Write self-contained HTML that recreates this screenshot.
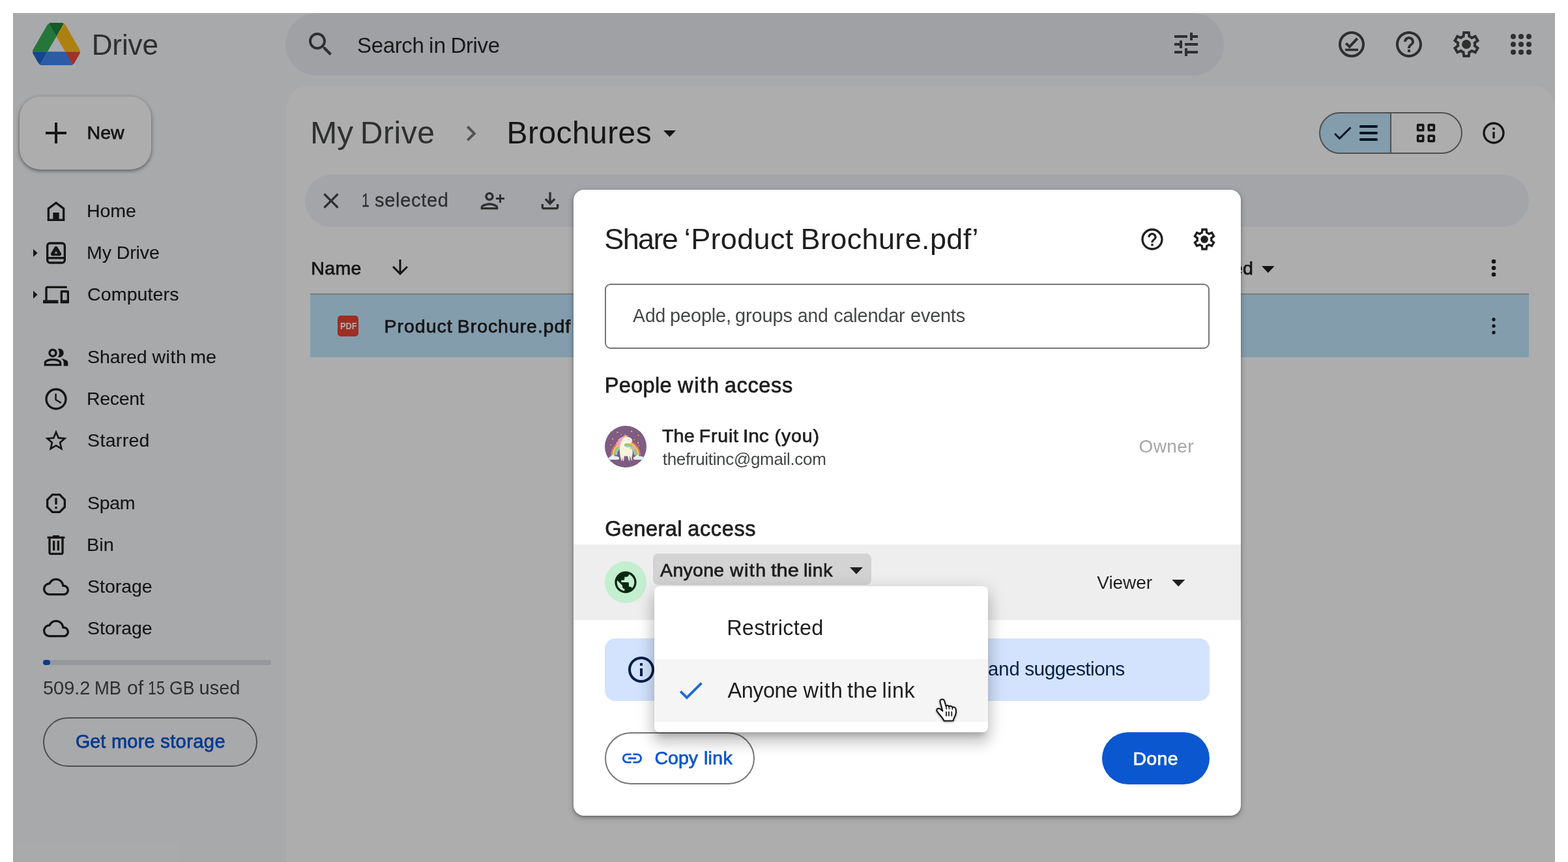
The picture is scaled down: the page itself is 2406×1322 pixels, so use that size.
<!DOCTYPE html>
<html lang="en"><head><meta charset="utf-8"><title>Brochures - Google Drive</title>
<style>
html,body{margin:0;padding:0;background:#fff}
body{width:2406px;height:1322px;overflow:hidden;position:relative;font-family:"Liberation Sans",sans-serif}
#app{position:absolute;left:0;top:0;width:2406px;height:1322px;overflow:hidden;clip-path:inset(20px 20px 0 20px);will-change:transform}
#dialog{position:absolute;left:0;top:0;width:2406px;height:1322px;will-change:transform}
#bg{position:absolute;left:20px;top:20px;width:2366px;height:1302px;background:#f8fafd}
#scrim{position:absolute;left:20px;top:20px;width:2366px;height:1302px;background:rgba(0,0,0,.32)}
.b{position:absolute;box-sizing:content-box}
.i{position:absolute;display:block}
.t{position:absolute;white-space:nowrap;line-height:1;margin:0;padding:0}
</style></head>
<body>
<div id="app">
<div id="bg"></div>
<div class="b" style="left:438px;top:20px;width:1440px;height:96px;background:#ebedf4;border-radius:48px"></div>
<svg class="i" style="left:468px;top:44px;width:48px;height:48px;color:#444746" viewBox="0 0 24 24" fill="currentColor"><path d="M15.5 14h-.79l-.28-.27C15.41 12.59 16 11.11 16 9.5 16 5.91 13.09 3 9.5 3S3 5.91 3 9.5 5.91 16 9.5 16c1.61 0 3.09-.59 4.23-1.57l.27.28v.79l5 4.99L20.49 19l-4.99-5zm-6 0C7.01 14 5 11.99 5 9.5S7.01 5 9.5 5 14 7.01 14 9.5 11.99 14 9.5 14z"/></svg>
<div class="w"><span class="t" style="top:53.0px;font-size:33px;color:#262626;left:548.0px;letter-spacing:-0.36px">Search</span> <span class="t" style="top:53.0px;font-size:33px;color:#262626;left:658.0px;transform:scaleX(1.019);transform-origin:0 0">in</span> <span class="t" style="top:53.0px;font-size:33px;color:#262626;left:691.5px;letter-spacing:-0.38px">Drive</span></div>
<svg class="i" style="left:1796px;top:44px;width:48px;height:48px;color:#444746" viewBox="0 0 24 24" fill="currentColor"><path d="M3 17v2h6v-2H3zM3 5v2h10V5H3zm10 16v-2h8v-2h-8v-2h-2v6h2zM7 9v2H3v2h4v2h2V9H7zm14 4v-2H11v2h10zm-6-4h2V7h4V5h-4V3h-2v6z"/></svg>
<svg class="i" style="left:2050px;top:44px;width:48px;height:48px;color:#444746" viewBox="0 0 24 24" fill="currentColor"><circle cx="12" cy="12" r="9" fill="none" stroke="currentColor" stroke-width="2"/><path d="M7.6 11.2l2.8 2.6 6-6.3" fill="none" stroke="currentColor" stroke-width="2"/><path d="M7 16.2h10" fill="none" stroke="currentColor" stroke-width="1.8"/></svg>
<svg class="i" style="left:2138px;top:44px;width:48px;height:48px;color:#444746" viewBox="0 0 24 24" fill="currentColor"><path d="M11 18h2v-2h-2v2zm1-16C6.48 2 2 6.48 2 12s4.48 10 10 10 10-4.48 10-10S17.52 2 12 2zm0 18c-4.41 0-8-3.59-8-8s3.59-8 8-8 8 3.59 8 8-3.59 8-8 8zm0-14c-2.21 0-4 1.79-4 4h2c0-1.1.9-2 2-2s2 .9 2 2c0 2-3 1.75-3 5h2c0-2.25 3-2.5 3-5 0-2.21-1.79-4-4-4z"/></svg>
<svg class="i" style="left:2226px;top:44px;width:48px;height:48px;color:#444746" viewBox="0 0 24 24" fill="currentColor"><path d="M9.250 22l-.400-3.200q-.325-.125-.613-.300-.287-.175-.562-.375L4.700 19.375l-2.750-4.750 2.575-1.950Q4.500 12.500 4.500 12.338v-.675q0-.163.025-.338L1.950 9.375l2.750-4.750 2.975 1.250q.275-.200.575-.375.300-.175.600-.300l.400-3.200h5.500l.400 3.200q.325.125.613.300.287.175.562.375l2.975-1.250 2.750 4.750-2.575 1.950q.025.175.025.338v.675q0 .162-.050.337l2.575 1.950-2.750 4.750-2.950-1.250q-.275.200-.575.375-.300.175-.600.300l-.400 3.200zM11 20h1.975l.350-2.650q.775-.200 1.438-.587.662-.388 1.212-.938l2.475 1.025.975-1.700-2.150-1.625q.125-.350.175-.737.050-.388.050-.788t-.050-.787q-.050-.388-.175-.738l2.150-1.625-.975-1.700-2.475 1.050q-.550-.575-1.212-.962-.663-.388-1.438-.588L13 4h-1.975l-.350 2.650q-.775.200-1.437.588-.663.387-1.213.937L5.550 7.150l-.975 1.700 2.150 1.600q-.125.375-.175.750-.050.375-.050.800 0 .400.050.775t.175.750l-2.150 1.625.975 1.700 2.475-1.050q.550.575 1.213.962.662.388 1.437.588zm1.050-4.500q1.450 0 2.475-1.025Q15.550 13.450 15.550 12q0-1.450-1.025-2.475Q13.500 8.500 12.050 8.500q-1.475 0-2.488 1.025Q8.550 10.550 8.550 12q0 1.450 1.012 2.475Q10.575 15.500 12.050 15.500z"/></svg>
<svg class="i" style="left:2310px;top:44px;width:48px;height:48px;color:#444746" viewBox="0 0 24 24" fill="currentColor"><circle cx="6" cy="6" r="2"/><circle cx="12" cy="6" r="2"/><circle cx="18" cy="6" r="2"/><circle cx="6" cy="12" r="2"/><circle cx="12" cy="12" r="2"/><circle cx="18" cy="12" r="2"/><circle cx="6" cy="18" r="2"/><circle cx="12" cy="18" r="2"/><circle cx="18" cy="18" r="2"/></svg>
<svg class="i" style="left:49.5px;top:34.6px;width:73px;height:65.300px" viewBox="0 0 87.3 78"><path d="m6.6 66.85 3.85 6.65c.8 1.4 1.95 2.5 3.3 3.3l13.75-23.8h-27.5c0 1.55.4 3.1 1.2 4.5z" fill="#1d67d2"/><path d="m43.65 25-13.75-23.8c-1.35.8-2.5 1.9-3.3 3.3l-25.400 44a9.060 9.060 0 0 0 -1.200 4.500h27.500z" fill="#36ae58"/><path d="m73.550 76.800c1.350-.800 2.500-1.900 3.300-3.300l1.600-2.750 7.650-13.250c.8-1.400 1.200-2.950 1.200-4.500h-27.502l5.852 11.500z" fill="#eb4a3b"/><path d="m43.650 25 13.750-23.800c-1.350-.8-2.900-1.200-4.500-1.200h-18.500c-1.600 0-3.150.45-4.500 1.200z" fill="#1d873b"/><path d="m59.800 53h-32.300l-13.750 23.800c1.350.8 2.900 1.200 4.500 1.200h50.800c1.600 0 3.150-.45 4.500-1.200z" fill="#4187f7"/><path d="m73.400 26.500-12.700-22c-.8-1.400-1.950-2.500-3.300-3.300l-13.750 23.800 16.150 28h27.450c0-1.550-.4-3.100-1.200-4.500z" fill="#ffbf18"/></svg>
<span class="t" style="top:47.0px;font-size:44px;color:#444746;left:140.7px;letter-spacing:-0.12px">Drive</span>
<div class="b" style="left:30px;top:148px;width:202px;height:112px;background:#fff;border-radius:32px;box-shadow:0 2px 4px rgba(0,0,0,.3),0 2px 6px 2px rgba(0,0,0,.15)"></div>
<div class="b" style="left:70px;top:202px;width:32px;height:4px;background:#1f1f1f"></div>
<div class="b" style="left:84px;top:188px;width:4px;height:32px;background:#1f1f1f"></div>
<span class="t" style="top:189.0px;font-size:28.5px;color:#1f1f1f;left:133.6px;-webkit-text-stroke:0.75px #1f1f1f">New</span>
<svg class="i" style="left:66px;top:303.7px;width:40px;height:40px;color:#1f1f1f" viewBox="0 0 24 24" fill="currentColor"><path d="M4 21V9l8-6 8 6v12H4zm2-2h12v-9l-6-4.5L6 10v9z" fill-rule="evenodd"/><path d="M9.2 13.2h5.6V20H9.2z"/></svg>
<div class="w"><span class="t" style="top:309.0px;font-size:28.5px;color:#1f1f1f;left:133.1px;letter-spacing:-0.13px;-webkit-text-stroke:0.15px #1f1f1f">Home</span></div>
<svg class="i" style="left:66px;top:367.5px;width:40px;height:40px;color:#1f1f1f" viewBox="0 0 24 24" fill="currentColor"><rect x="4" y="3" width="16" height="18" rx="2.400" fill="none" stroke="currentColor" stroke-width="2"/><path d="M4 16.600h16" stroke="currentColor" stroke-width="2" fill="none"/><path d="M12 5.900c.620 0 1.150.300 1.450.830l3.200 5.350c.660 1.130-.130 2.520-1.450 2.520H8.800c-1.320 0-2.110-1.390-1.450-2.520l3.200-5.350c.300-.530.830-.830 1.450-.830zm0 4.300l-1.350 2.300h2.700z" fill-rule="evenodd"/></svg>
<div class="w"><span class="t" style="top:373.0px;font-size:28.5px;color:#1f1f1f;left:133.1px;letter-spacing:-0.11px;-webkit-text-stroke:0.15px #1f1f1f">My Drive</span></div>
<svg class="i" style="left:66px;top:432px;width:40px;height:40px;color:#1f1f1f" viewBox="0 0 24 24" fill="currentColor"><path d="M4 6h18V4H4c-1.1 0-2 .9-2 2v11H0v3h14v-3H4V6zm19 2h-6c-.55 0-1 .45-1 1v10c0 .55.45 1 1 1h6c.55 0 1-.45 1-1V9c0-.55-.45-1-1-1zm-1 9h-4v-7h4v7z"/></svg>
<div class="w"><span class="t" style="top:437.0px;font-size:28.5px;color:#1f1f1f;left:134.1px;letter-spacing:0.12px;-webkit-text-stroke:0.15px #1f1f1f">Computers</span></div>
<svg class="i" style="left:66px;top:528px;width:40px;height:40px;color:#1f1f1f" viewBox="0 0 24 24" fill="currentColor"><path d="M1 20v-2.800c0-.570.150-1.090.440-1.560.290-.470.680-.840 1.160-1.090 1.030-.520 2.080-.900 3.150-1.160C6.820 13.130 7.900 13 9 13s2.180.130 3.250.390c1.070.260 2.120.640 3.150 1.160.480.250.870.620 1.160 1.090.290.470.440.990.440 1.560V20H1zm18 0v-3c0-.730-.200-1.440-.610-2.110-.410-.680-.990-1.260-1.740-1.740.850.100 1.650.270 2.400.510.750.240 1.450.540 2.100.890.600.330 1.060.700 1.380 1.110.320.410.470.850.470 1.340v3h-4zM9 12c-1.100 0-2.040-.390-2.830-1.180C5.390 10.040 5 9.100 5 8s.390-2.040 1.170-2.830C6.960 4.390 7.900 4 9 4s2.040.390 2.830 1.170C12.610 5.960 13 6.900 13 8s-.390 2.040-1.170 2.820C11.040 11.610 10.100 12 9 12zm10-4c0 1.100-.390 2.040-1.170 2.820-.790.790-1.730 1.180-2.830 1.180-.180 0-.420-.020-.700-.060-.280-.040-.520-.090-.700-.140.450-.530.800-1.130 1.040-1.780.240-.650.360-1.320.360-2.020s-.120-1.370-.360-2.020c-.240-.650-.590-1.250-1.040-1.780.230-.080.470-.140.700-.160.230-.030.470-.040.700-.040 1.100 0 2.040.390 2.830 1.170C18.610 5.960 19 6.900 19 8zM3 18h12v-.800c0-.180-.050-.350-.140-.500-.090-.150-.210-.270-.360-.350-.900-.450-1.810-.790-2.730-1.010C10.860 15.110 9.930 15 9 15s-1.860.110-2.780.340c-.920.220-1.820.560-2.720 1.010-.150.080-.270.200-.360.350-.090.150-.140.320-.140.500v.800zm6-8c.550 0 1.020-.200 1.410-.590.390-.390.590-.860.590-1.410s-.200-1.020-.590-1.410C10.020 6.200 9.550 6 9 6s-1.020.200-1.410.590C7.200 6.980 7 7.450 7 8s.200 1.020.590 1.410C7.980 9.800 8.450 10 9 10z"/></svg>
<div class="w"><span class="t" style="top:533.0px;font-size:28.5px;color:#1f1f1f;left:134.1px;letter-spacing:-0.10px;-webkit-text-stroke:0.15px #1f1f1f">Shared</span> <span class="t" style="top:533.0px;font-size:28.5px;color:#1f1f1f;left:233.4px;letter-spacing:0.59px;-webkit-text-stroke:0.15px #1f1f1f">with</span> <span class="t" style="top:533.0px;font-size:28.5px;color:#1f1f1f;left:292.2px;-webkit-text-stroke:0.15px #1f1f1f;transform:scaleX(1.015);transform-origin:0 0">me</span></div>
<svg class="i" style="left:66px;top:592px;width:40px;height:40px;color:#1f1f1f" viewBox="0 0 24 24" fill="currentColor"><path d="M11.99 2C6.47 2 2 6.48 2 12s4.47 10 9.99 10C17.52 22 22 17.52 22 12S17.52 2 11.99 2zM12 20c-4.42 0-8-3.58-8-8s3.58-8 8-8 8 3.58 8 8-3.58 8-8 8zm.5-13H11v6l5.25 3.15.75-1.23-4.5-2.67z"/></svg>
<div class="w"><span class="t" style="top:597.0px;font-size:28.5px;color:#1f1f1f;left:133.1px;letter-spacing:-0.33px;-webkit-text-stroke:0.15px #1f1f1f">Recent</span></div>
<svg class="i" style="left:66px;top:656px;width:40px;height:40px;color:#1f1f1f" viewBox="0 0 24 24" fill="currentColor"><path d="M22 9.24l-7.19-.62L12 2 9.19 8.63 2 9.24l5.46 4.73L5.82 21 12 17.27 18.18 21l-1.63-7.03L22 9.24zM12 15.4l-3.76 2.27 1-4.28-3.32-2.88 4.38-.38L12 6.1l1.71 4.04 4.38.38-3.32 2.88 1 4.28L12 15.4z"/></svg>
<div class="w"><span class="t" style="top:661.0px;font-size:28.5px;color:#1f1f1f;left:134.1px;letter-spacing:0.32px;-webkit-text-stroke:0.15px #1f1f1f">Starred</span></div>
<svg class="i" style="left:66px;top:752px;width:40px;height:40px;color:#1f1f1f" viewBox="0 0 24 24" fill="currentColor"><path d="M15.73 3H8.27L3 8.27v7.46L8.27 21h7.46L21 15.73V8.27L15.73 3zM19 14.9L14.9 19H9.1L5 14.9V9.1L9.1 5h5.8L19 9.1v5.8z"/><path d="M11 7h2v6h-2z"/><circle cx="12" cy="16" r="1.1"/></svg>
<div class="w"><span class="t" style="top:757.0px;font-size:28.5px;color:#1f1f1f;left:134.1px;letter-spacing:-0.33px;-webkit-text-stroke:0.15px #1f1f1f">Spam</span></div>
<svg class="i" style="left:66px;top:816px;width:40px;height:40px;color:#1f1f1f" viewBox="0 0 24 24" fill="currentColor"><path d="M15 3H9v1H4v2h1v13c0 1.1.9 2 2 2h10c1.1 0 2-.9 2-2V6h1V4h-5V3zm2 3v13H7V6h10z"/><path d="M9 8h2v9H9zm4 0h2v9h-2z"/></svg>
<div class="w"><span class="t" style="top:821.0px;font-size:28.5px;color:#1f1f1f;left:133.1px;-webkit-text-stroke:0.15px #1f1f1f;transform:scaleX(1.012);transform-origin:0 0">Bin</span></div>
<svg class="i" style="left:66px;top:880px;width:40px;height:40px;color:#1f1f1f" viewBox="0 0 24 24" fill="currentColor"><path d="M19.35 10.04C18.67 6.59 15.64 4 12 4 9.11 4 6.6 5.64 5.35 8.04 2.34 8.36 0 10.91 0 14c0 3.31 2.69 6 6 6h13c2.76 0 5-2.24 5-5 0-2.64-2.05-4.78-4.65-4.96zM19 18H6c-2.21 0-4-1.79-4-4 0-2.05 1.53-3.76 3.56-3.97l1.07-.11.5-.95C8.08 7.14 9.94 6 12 6c2.62 0 4.88 1.86 5.39 4.43l.3 1.5 1.53.11c1.56.1 2.78 1.41 2.78 2.96 0 1.65-1.35 3-3 3z"/></svg>
<div class="w"><span class="t" style="top:885.0px;font-size:28.5px;color:#1f1f1f;left:134.1px;letter-spacing:-0.04px;-webkit-text-stroke:0.15px #1f1f1f">Storage</span></div>
<svg class="i" style="left:66px;top:944px;width:40px;height:40px;color:#1f1f1f" viewBox="0 0 24 24" fill="currentColor"><path d="M19.35 10.04C18.67 6.59 15.64 4 12 4 9.11 4 6.6 5.64 5.35 8.04 2.34 8.36 0 10.91 0 14c0 3.31 2.69 6 6 6h13c2.76 0 5-2.24 5-5 0-2.64-2.05-4.78-4.65-4.96zM19 18H6c-2.21 0-4-1.79-4-4 0-2.05 1.53-3.76 3.56-3.97l1.07-.11.5-.95C8.08 7.14 9.94 6 12 6c2.62 0 4.88 1.86 5.39 4.43l.3 1.5 1.53.11c1.56.1 2.78 1.41 2.78 2.96 0 1.65-1.35 3-3 3z"/></svg>
<div class="w"><span class="t" style="top:949.0px;font-size:28.5px;color:#1f1f1f;left:134.1px;letter-spacing:-0.04px;-webkit-text-stroke:0.15px #1f1f1f">Storage</span></div>
<svg class="i" style="left:50px;top:380.5px;width:9px;height:14px" viewBox="0 0 9 14"><path d="M1 1l6.600 6L1 13z" fill="#1f1f1f"/></svg>
<svg class="i" style="left:50px;top:444.5px;width:9px;height:14px" viewBox="0 0 9 14"><path d="M1 1l6.600 6L1 13z" fill="#1f1f1f"/></svg>
<div class="b" style="left:66px;top:1012px;width:350px;height:8px;background:#dfe1e5;border-radius:4px"></div>
<div class="b" style="left:66px;top:1012px;width:11px;height:8px;background:#0b57d0;border-radius:4px"></div>
<div class="w"><span class="t" style="top:1041.0px;font-size:29px;color:#444746;left:66.0px;letter-spacing:-0.04px">509.2</span> <span class="t" style="top:1041.0px;font-size:29px;color:#444746;left:145.4px;transform:scaleX(0.945);transform-origin:0 0">MB</span> <span class="t" style="top:1041.0px;font-size:29px;color:#444746;left:194.5px;transform:scaleX(1.043);transform-origin:0 0">of</span> <span class="t" style="top:1041.0px;font-size:29px;color:#444746;left:227.2px;transform:scaleX(0.801);transform-origin:0 0">15</span> <span class="t" style="top:1041.0px;font-size:29px;color:#444746;left:260.0px;transform:scaleX(0.918);transform-origin:0 0">GB</span> <span class="t" style="top:1041.0px;font-size:29px;color:#444746;left:305.6px;letter-spacing:-0.02px">used</span></div>
<div class="b" style="left:66px;top:1100px;width:329px;height:76px;border:2px solid #747775;border-radius:38px;box-sizing:border-box"></div>
<div class="w"><span class="t" style="top:1123.0px;font-size:29px;color:#0b57d0;left:116.4px;-webkit-text-stroke:0.75px #0b57d0;transform:scaleX(0.989);transform-origin:0 0">Get</span> <span class="t" style="top:1123.0px;font-size:29px;color:#0b57d0;left:170.9px;letter-spacing:0.25px;-webkit-text-stroke:0.75px #0b57d0">more</span> <span class="t" style="top:1123.0px;font-size:29px;color:#0b57d0;left:246.2px;letter-spacing:0.44px;-webkit-text-stroke:0.75px #0b57d0">storage</span></div>
<div class="b" style="left:440px;top:132px;width:1946px;height:1200px;background:#fff;border-radius:32px 32px 0 0"></div>
<div class="w"><span class="t" style="top:180.0px;font-size:48px;color:#444746;left:476.0px;transform:scaleX(1.034);transform-origin:0 0">My</span> <span class="t" style="top:180.0px;font-size:48px;color:#444746;left:552.7px;letter-spacing:0.55px">Drive</span></div>
<svg class="i" style="left:698.9px;top:180.5px;width:47.4px;height:47.4px;color:#7a7b7b" viewBox="0 0 24 24" fill="currentColor"><path d="M10 6L8.59 7.41 13.17 12l-4.58 4.59L10 18l6-6z"/></svg>
<span class="t" style="top:180.0px;font-size:48px;color:#1f1f1f;left:777.6px;letter-spacing:0.41px">Brochures</span>
<svg class="i" style="left:1018px;top:200px;width:19px;height:10px" viewBox="0 0 19 10"><path d="M0 0h19L9.500 10z" fill="#1f1f1f"/></svg>
<div class="b" style="left:2024px;top:172px;width:220px;height:64px;border:2px solid #747775;border-radius:32px;box-sizing:border-box;background:linear-gradient(90deg,#c2e7ff 0,#c2e7ff 107px,#747775 107px,#747775 109px,#fff 109px)"></div>
<svg class="i" style="left:2042px;top:186px;width:36px;height:36px;color:#001d35" viewBox="0 0 24 24" fill="currentColor"><path d="M9 16.17L4.83 12l-1.42 1.41L9 19 21 7l-1.41-1.41z"/></svg>
<svg class="i" style="left:2080px;top:184px;width:40px;height:40px;color:#001d35" viewBox="0 0 24 24" fill="currentColor"><g fill="none" stroke="currentColor" stroke-width="2.400" stroke-linecap="round"><path d="M4.700 6h14.600M4.700 12h14.600M4.700 18h14.600"/></g></svg>
<svg class="i" style="left:2168px;top:184.2px;width:40px;height:40px;color:#1f1f1f" viewBox="0 0 24 24" fill="currentColor"><g fill="none" stroke="currentColor" stroke-width="2.150" stroke-linejoin="round"><rect x="4.575" y="4.575" width="4.850" height="4.850" rx=".5"/><rect x="14.575" y="4.575" width="4.850" height="4.850" rx=".5"/><rect x="4.575" y="14.575" width="4.850" height="4.850" rx=".5"/><rect x="14.575" y="14.575" width="4.850" height="4.850" rx=".5"/></g></svg>
<svg class="i" style="left:2272px;top:184px;width:40px;height:40px;color:#1f1f1f" viewBox="0 0 24 24" fill="currentColor"><path d="M11 7h2v2h-2zm0 4h2v6h-2zm1-9C6.48 2 2 6.48 2 12s4.48 10 10 10 10-4.48 10-10S17.52 2 12 2zm0 18c-4.41 0-8-3.59-8-8s3.59-8 8-8 8 3.59 8 8-3.59 8-8 8z"/></svg>
<div class="b" style="left:468px;top:268px;width:1878px;height:80px;background:#f0f4f9;border-radius:40px"></div>
<svg class="i" style="left:488.1px;top:288.2px;width:40px;height:40px;color:#444746" viewBox="0 0 24 24" fill="currentColor"><path d="M19 6.41L17.59 5 12 10.59 6.41 5 5 6.41 10.59 12 5 17.59 6.41 19 12 13.41 17.59 19 19 17.59 13.41 12z"/></svg>
<div class="w"><span class="t" style="top:293.0px;font-size:29px;color:#444746;left:554.9px;-webkit-text-stroke:0.3px #444746;transform:scaleX(0.731);transform-origin:0 0">1</span> <span class="t" style="top:293.0px;font-size:29px;color:#444746;left:575.0px;letter-spacing:0.71px;-webkit-text-stroke:0.3px #444746">selected</span></div>
<svg class="i" style="left:736px;top:288.2px;width:40px;height:40px;color:#444746" viewBox="0 0 24 24" fill="currentColor"><g transform="translate(24 0) scale(-1 1)"><path d="M15 12c2.21 0 4-1.79 4-4s-1.79-4-4-4-4 1.79-4 4 1.79 4 4 4zm0-6c1.1 0 2 .9 2 2s-.9 2-2 2-2-.9-2-2 .9-2 2-2zm0 8c-2.67 0-8 1.34-8 4v2h16v-2c0-2.66-5.33-4-8-4zm-6 4c.22-.72 3.31-2 6-2 2.7 0 5.8 1.29 6 2H9z"/></g></svg>
<div class="b" style="left:760.6px;top:303px;width:13.6px;height:3.2px;background:#444746"></div>
<div class="b" style="left:765.8px;top:297.8px;width:3.2px;height:13.6px;background:#444746"></div>
<svg class="i" style="left:823.9px;top:288px;width:40px;height:40px;color:#444746" viewBox="0 0 24 24" fill="currentColor"><path d="M18 15v3H6v-3H4v3c0 1.1.9 2 2 2h12c1.1 0 2-.9 2-2v-3h-2zm-1-4l-1.41-1.41L13 12.17V4h-2v8.17L8.41 9.59 7 11l5 5 5-5z"/></svg>
<span class="t" style="top:397.0px;font-size:28.5px;color:#1f1f1f;left:477.3px;letter-spacing:0.34px;-webkit-text-stroke:0.75px #1f1f1f">Name</span>
<svg class="i" style="left:596px;top:392px;width:36px;height:36px;color:#1f1f1f" viewBox="0 0 24 24" fill="currentColor"><path d="M20 12l-1.41-1.41L13 16.17V4h-2v12.17l-5.580-5.590L4 12l8 8 8-8z"/></svg>
<span class="t" style="top:397.0px;font-size:28.5px;color:#1f1f1f;right:483.2px;-webkit-text-stroke:0.75px #1f1f1f">Last modified</span>
<svg class="i" style="left:1935.500px;top:408px;width:19.500px;height:10.500px" viewBox="0 0 19 10"><path d="M0 0h19L9.500 10z" fill="#1f1f1f"/></svg>
<svg class="i" style="left:2272px;top:391px;width:40px;height:40px;color:#1f1f1f" viewBox="0 0 24 24" fill="currentColor"><circle cx="12" cy="6" r="2"/><circle cx="12" cy="12" r="2"/><circle cx="12" cy="18" r="2"/></svg>
<div class="b" style="left:476px;top:450px;width:1870px;height:98px;background:#c2e7ff;border-top:2px solid #b4b6b8;box-sizing:border-box"></div>
<div class="b" style="left:518px;top:484px;width:32px;height:32px;background:#ea4335;border-radius:5px"></div>
<span class="t" style="top:492.0px;font-size:15px;color:#fff;left:521.5px;font-weight:700;transform:scaleX(0.850);transform-origin:0 0">PDF</span>
<div class="w"><span class="t" style="top:486.0px;font-size:28.5px;color:#1f1f1f;left:589.4px;letter-spacing:1.01px;-webkit-text-stroke:0.75px #1f1f1f">Product</span> <span class="t" style="top:486.0px;font-size:28.5px;color:#1f1f1f;left:701.8px;letter-spacing:0.93px;-webkit-text-stroke:0.75px #1f1f1f">Brochure.pdf</span></div>
<svg class="i" style="left:2272px;top:479.8px;width:40px;height:40px;color:#1f1f1f" viewBox="0 0 24 24" fill="currentColor"><circle cx="12" cy="6" r="1.6"/><circle cx="12" cy="12" r="1.6"/><circle cx="12" cy="18" r="1.6"/></svg>
<div id="scrim"></div>
</div>
<div id="dialog">
<div class="b" style="left:880px;top:291px;width:1024px;height:960px;background:#fff;border-radius:16px;box-shadow:0 2px 4px rgba(0,0,0,.3),0 3px 8px 2px rgba(0,0,0,.15)"></div>
<div class="w"><span class="t" style="top:344.0px;font-size:45px;color:#1f1f1f;left:927.3px;letter-spacing:-1.62px">Share</span> <span class="t" style="top:344.0px;font-size:45px;color:#1f1f1f;left:1049.8px;letter-spacing:0.34px">‘Product</span> <span class="t" style="top:344.0px;font-size:45px;color:#1f1f1f;left:1228.6px;letter-spacing:0.36px">Brochure.pdf’</span></div>
<svg class="i" style="left:1748px;top:347px;width:40px;height:40px;color:#1f1f1f" viewBox="0 0 24 24" fill="currentColor"><path d="M11 18h2v-2h-2v2zm1-16C6.48 2 2 6.48 2 12s4.48 10 10 10 10-4.48 10-10S17.52 2 12 2zm0 18c-4.41 0-8-3.59-8-8s3.59-8 8-8 8 3.59 8 8-3.59 8-8 8zm0-14c-2.21 0-4 1.79-4 4h2c0-1.1.9-2 2-2s2 .9 2 2c0 2-3 1.75-3 5h2c0-2.25 3-2.5 3-5 0-2.21-1.79-4-4-4z"/></svg>
<svg class="i" style="left:1828px;top:347px;width:40px;height:40px;color:#1f1f1f" viewBox="0 0 24 24" fill="currentColor"><path d="M9.250 22l-.400-3.200q-.325-.125-.613-.300-.287-.175-.562-.375L4.700 19.375l-2.750-4.750 2.575-1.950Q4.500 12.500 4.500 12.338v-.675q0-.163.025-.338L1.950 9.375l2.750-4.750 2.975 1.250q.275-.200.575-.375.300-.175.600-.300l.400-3.200h5.500l.400 3.200q.325.125.613.300.287.175.562.375l2.975-1.250 2.750 4.750-2.575 1.950q.025.175.025.338v.675q0 .162-.050.337l2.575 1.950-2.750 4.750-2.950-1.250q-.275.200-.575.375-.300.175-.600.300l-.400 3.200zM11 20h1.975l.350-2.650q.775-.200 1.438-.587.662-.388 1.212-.938l2.475 1.025.975-1.700-2.150-1.625q.125-.350.175-.737.050-.388.050-.788t-.050-.787q-.050-.388-.175-.738l2.150-1.625-.975-1.700-2.475 1.050q-.550-.575-1.212-.962-.663-.388-1.438-.588L13 4h-1.975l-.350 2.650q-.775.200-1.437.588-.663.387-1.213.937L5.550 7.150l-.975 1.700 2.150 1.600q-.125.375-.175.750-.050.375-.050.800 0 .400.050.775t.175.750l-2.150 1.625.975 1.700 2.475-1.050q.550.575 1.213.962.662.388 1.437.588zm1.050-4.500q1.450 0 2.475-1.025Q15.550 13.450 15.550 12q0-1.450-1.025-2.475Q13.500 8.500 12.050 8.500q-1.475 0-2.488 1.025Q8.550 10.550 8.550 12q0 1.450 1.012 2.475Q10.575 15.500 12.050 15.500z"/></svg>
<div class="b" style="left:928px;top:435px;width:928px;height:100px;border:2px solid #747775;border-radius:9px;box-sizing:border-box"></div>
<div class="w"><span class="t" style="top:470.0px;font-size:29px;color:#444746;left:970.6px;transform:scaleX(0.976);transform-origin:0 0">Add</span> <span class="t" style="top:470.0px;font-size:29px;color:#444746;left:1028.1px;letter-spacing:-0.20px">people,</span> <span class="t" style="top:470.0px;font-size:29px;color:#444746;left:1127.9px;letter-spacing:-0.09px">groups</span> <span class="t" style="top:470.0px;font-size:29px;color:#444746;left:1223.9px;transform:scaleX(0.966);transform-origin:0 0">and</span> <span class="t" style="top:470.0px;font-size:29px;color:#444746;left:1279.2px;letter-spacing:-0.25px">calendar</span> <span class="t" style="top:470.0px;font-size:29px;color:#444746;left:1397.1px;letter-spacing:-0.28px">events</span></div>
<div class="w"><span class="t" style="top:575.0px;font-size:32.5px;color:#1f1f1f;left:927.8px;letter-spacing:0.32px;-webkit-text-stroke:0.75px #1f1f1f">People</span> <span class="t" style="top:575.0px;font-size:32.5px;color:#1f1f1f;left:1040.0px;letter-spacing:1.80px;-webkit-text-stroke:0.75px #1f1f1f">with</span> <span class="t" style="top:575.0px;font-size:32.5px;color:#1f1f1f;left:1111.8px;letter-spacing:0.65px;-webkit-text-stroke:0.75px #1f1f1f">access</span></div>
<svg class="i" style="left:928px;top:653px;width:64px;height:64px" viewBox="0 0 64 64"><circle cx="32" cy="32" r="32" fill="#7f5c82"/>
<g fill="none" stroke-width="2.400"><path d="M10.400 45a21.600 21.600 0 0 1 43.200 0" stroke="#f3706c"/><path d="M12.800 45a19.200 19.200 0 0 1 38.400 0" stroke="#efd45a"/><path d="M15.200 45a16.800 16.800 0 0 1 33.600 0" stroke="#a9c95a"/><path d="M17.600 45a14.400 14.400 0 0 1 28.800 0" stroke="#92d3d8"/></g>
<g fill="#f2d23c"><circle cx="19.500" cy="10" r="1.100"/><circle cx="41.200" cy="8.700" r="1.100"/><circle cx="51.500" cy="14.500" r=".9"/><circle cx="12.200" cy="20.300" r="1"/><circle cx="45.300" cy="21.500" r=".8"/><circle cx="51.200" cy="26.200" r="1.100"/><circle cx="9.300" cy="29.500" r=".8"/><circle cx="25.200" cy="13.500" r=".8"/><circle cx="52.400" cy="30.500" r=".7"/></g>
<path d="M27 17c3-2.600 7.500-2.800 10-1.200-3 .4-5 2-6.500 4.500-2 3-4 6-4.500 10.500-.3 2.500-1.500 3.700-3.500 3.200-2.500-.6-3-2.600-2.600-4.700-2 .2-3-.8-2.400-2.400 1-2.600 2.500-3.300 3.500-3.700-1-.4-1.300-1.200-.6-2 1.600-1.800 4.300-3 6.600-4.200z" fill="#f5a3b7"/>
<path d="M40.500 32.500c2.500-1.600 5.600-1 8 .500-1.200.6-1.600 1.400-1.400 2.300-1.800-.3-2.600.3-3 1.400-1.600-.8-3-2.200-3.600-4.200z" fill="#f5a3b7"/>
<path d="M26.500 22c.5-3 3.500-5 7-5 4.500 0 8.500 2.200 8.700 5.600.1 2.600-1.700 4.300-4.700 4.500-3 .2-6.600-.8-7.500 2-.7 2.300 1.500 3.300 4.500 3.300 4.500 0 8.400 2.600 8.400 8 0 3-1 5-1.400 7.300-.3 2 .2 4.300.2 5.800 0 .500-.6.500-.9-.2-.7-2-1.600-4.200-2.200-6.800h-.6c.3 2.600.2 5-.2 7-.1.600-.8.600-1-.1-.5-2.300-1-4.600-1.600-6.900h-5.400c-.2 2.500-.4 5-.9 7.200-.1.600-.8.600-1 0-.4-1.700-.7-3.600-.9-5.600l-.6 5.200c-.1.700-.8.700-1 0-1-4-2-8.300-2.400-12.300-.7-7 .3-13.500 3.500-19z" fill="#f6f5dc"/>
<path d="M31.200 11.400l1.300 5.600h-2.400z" fill="#eccb4a"/>
<path d="M35.500 21.700c.7-.6 1.700-.6 2.400 0" fill="none" stroke="#8a7a5a" stroke-width=".5"/>
<circle cx="29" cy="23.300" r=".7" fill="#e8d05a"/><circle cx="39.500" cy="35" r=".9" fill="#d8c050"/>
<g fill="#dff1f1"><path d="M6 50c0-1.500 1.200-2.500 2.600-2.500.5-1.700 2-2.800 3.700-2.800 1.600 0 2.900.9 3.500 2.200 1-.6 2.500-.5 3.400.4 1.500-.2 3 .9 3 2.500 0 1.200-1 2.200-2.400 2.200H8.400C7 52 6 51.200 6 50z"/><path d="M43.800 50c0-1.500 1.200-2.500 2.600-2.500.5-1.700 2-2.800 3.700-2.800 1.600 0 2.900.9 3.500 2.200 1-.6 2.500-.5 3.400.4 1.500-.2 3 .9 3 2.500 0 1.200-1 2.200-2.400 2.200H46.200c-1.400 0-2.400-.8-2.400-2z"/></g></svg>
<div class="w"><span class="t" style="top:654.0px;font-size:28.5px;color:#1f1f1f;left:1016.4px;-webkit-text-stroke:0.75px #1f1f1f;transform:scaleX(1.011);transform-origin:0 0">The</span> <span class="t" style="top:654.0px;font-size:28.5px;color:#1f1f1f;left:1072.8px;letter-spacing:0.78px;-webkit-text-stroke:0.75px #1f1f1f">Fruit</span> <span class="t" style="top:654.0px;font-size:28.5px;color:#1f1f1f;left:1140.3px;-webkit-text-stroke:0.75px #1f1f1f;transform:scaleX(1.046);transform-origin:0 0">Inc</span> <span class="t" style="top:654.0px;font-size:28.5px;color:#1f1f1f;left:1188.6px;letter-spacing:0.89px;-webkit-text-stroke:0.75px #1f1f1f">(you)</span></div>
<span class="t" style="top:691.0px;font-size:26px;color:#444746;left:1016.8px;letter-spacing:-0.33px">thefruitinc@gmail.com</span>
<span class="t" style="top:671.0px;font-size:28px;color:#a6a6a6;left:1747.6px;letter-spacing:0.38px">Owner</span>
<div class="w"><span class="t" style="top:795.0px;font-size:32.5px;color:#1f1f1f;left:928.3px;letter-spacing:0.42px;-webkit-text-stroke:0.75px #1f1f1f">General</span> <span class="t" style="top:795.0px;font-size:32.5px;color:#1f1f1f;left:1055.2px;letter-spacing:0.65px;-webkit-text-stroke:0.75px #1f1f1f">access</span></div>
<div class="b" style="left:880px;top:835px;width:1024px;height:116px;background:#eee"></div>
<div class="b" style="left:928px;top:861px;width:64px;height:64px;background:#c4eed0;border-radius:50%"></div>
<svg class="i" style="left:940px;top:873px;width:40px;height:40px;color:#072711" viewBox="0 0 24 24" fill="currentColor"><path d="M12 2C6.48 2 2 6.48 2 12s4.48 10 10 10 10-4.48 10-10S17.52 2 12 2zm-1 17.93c-3.95-.49-7-3.85-7-7.93 0-.62.08-1.21.21-1.79L9 15v1c0 1.1.9 2 2 2v1.93zm6.9-2.54c-.26-.81-1-1.39-1.9-1.39h-1v-3c0-.55-.45-1-1-1H8v-2h2c.55 0 1-.45 1-1V7h2c1.1 0 2-.9 2-2v-.41c2.93 1.19 5 4.06 5 7.41 0 2.08-.8 3.97-2.1 5.39z"/></svg>
<div class="b" style="left:1002px;top:849px;width:335px;height:48px;background:#d3d3d3;border-radius:8px"></div>
<div class="w"><span class="t" style="top:860.0px;font-size:28.5px;color:#1f1f1f;left:1013.1px;letter-spacing:0.28px;-webkit-text-stroke:0.75px #1f1f1f">Anyone</span> <span class="t" style="top:860.0px;font-size:28.5px;color:#1f1f1f;left:1120.0px;letter-spacing:1.45px;-webkit-text-stroke:0.75px #1f1f1f">with</span> <span class="t" style="top:860.0px;font-size:28.5px;color:#1f1f1f;left:1182.9px;-webkit-text-stroke:0.75px #1f1f1f;transform:scaleX(1.086);transform-origin:0 0">the</span> <span class="t" style="top:860.0px;font-size:28.5px;color:#1f1f1f;left:1232.9px;letter-spacing:0.61px;-webkit-text-stroke:0.75px #1f1f1f">link</span></div>
<svg class="i" style="left:1303.500px;top:870.200px;width:20px;height:10.500px" viewBox="0 0 19 10"><path d="M0 0h19L9.500 10z" fill="#1f1f1f"/></svg>
<span class="t" style="top:880.0px;font-size:28px;color:#1f1f1f;left:1683.3px;letter-spacing:-0.07px">Viewer</span>
<svg class="i" style="left:1797.600px;top:889px;width:20.500px;height:10.500px" viewBox="0 0 19 10"><path d="M0 0h19L9.500 10z" fill="#1f1f1f"/></svg>
<div class="b" style="left:928px;top:979px;width:928px;height:96px;background:#d3e3fd;border-radius:16px"></div>
<svg class="i" style="left:960px;top:1003px;width:48px;height:48px;color:#041e49" viewBox="0 0 24 24" fill="currentColor"><path d="M11 7h2v2h-2zm0 4h2v6h-2zm1-9C6.48 2 2 6.48 2 12s4.48 10 10 10 10-4.48 10-10S17.52 2 12 2zm0 18c-4.41 0-8-3.59-8-8s3.59-8 8-8 8 3.59 8 8-3.59 8-8 8z"/></svg>
<span class="t" style="top:1011.0px;font-size:30px;color:#041e49;right:896.5px;letter-spacing:-0.90px">Viewers of this file can see comments</span>
<div class="w"><span class="t" style="top:1011.0px;font-size:30px;color:#041e49;left:1516.2px;transform:scaleX(0.975);transform-origin:0 0">and</span> <span class="t" style="top:1011.0px;font-size:30px;color:#041e49;left:1572.2px;letter-spacing:-0.60px">suggestions</span></div>
<div class="b" style="left:928px;top:1123px;width:230px;height:79.5px;border:2px solid #747775;border-radius:40px;box-sizing:border-box"></div>
<svg class="i" style="left:951.9px;top:1144.6px;width:36px;height:36px;color:#0b57d0" viewBox="0 0 24 24" fill="currentColor"><path d="M3.9 12c0-1.71 1.39-3.1 3.1-3.1h4V7H7c-2.76 0-5 2.24-5 5s2.24 5 5 5h4v-1.9H7c-1.71 0-3.1-1.39-3.1-3.1zM8 13h8v-2H8v2zm9-6h-4v1.9h4c1.71 0 3.1 1.39 3.1 3.1s-1.39 3.1-3.1 3.1h-4V17h4c2.76 0 5-2.24 5-5s-2.24-5-5-5z"/></svg>
<div class="w"><span class="t" style="top:1148.0px;font-size:28.5px;color:#0b57d0;left:1004.5px;letter-spacing:0.01px;-webkit-text-stroke:0.75px #0b57d0">Copy</span> <span class="t" style="top:1148.0px;font-size:28.5px;color:#0b57d0;left:1079.9px;letter-spacing:0.36px;-webkit-text-stroke:0.75px #0b57d0">link</span></div>
<div class="b" style="left:1691px;top:1123px;width:165px;height:80px;background:#0b57d0;border-radius:40px"></div>
<span class="t" style="top:1149.0px;font-size:28.5px;color:#fff;left:1738.4px;letter-spacing:0.39px;-webkit-text-stroke:0.75px #fff">Done</span>
<div class="b" style="left:1004px;top:899px;width:512px;height:224px;background:#fff;border-radius:8px;box-shadow:0 10px 10px -6px rgba(0,0,0,.2),0 16px 20px 2px rgba(0,0,0,.14),0 6px 28px 4px rgba(0,0,0,.12)"></div>
<div class="b" style="left:1004px;top:1011px;width:512px;height:96px;background:#f5f5f5"></div>
<span class="t" style="top:947.0px;font-size:32.5px;color:#1f1f1f;left:1115.2px;letter-spacing:0.20px">Restricted</span>
<svg class="i" style="left:1035.8px;top:1034.7px;width:47.8px;height:47.8px;color:#1b6ae0" viewBox="0 0 24 24" fill="currentColor"><path d="M9 16.17L4.83 12l-1.42 1.41L9 19 21 7l-1.41-1.41z"/></svg>
<div class="w"><span class="t" style="top:1043.0px;font-size:32.5px;color:#1f1f1f;left:1116.6px;letter-spacing:-0.57px">Anyone</span> <span class="t" style="top:1043.0px;font-size:32.5px;color:#1f1f1f;left:1232.4px;letter-spacing:0.86px">with</span> <span class="t" style="top:1043.0px;font-size:32.5px;color:#1f1f1f;left:1299.8px;transform:scaleX(1.020);transform-origin:0 0">the</span> <span class="t" style="top:1043.0px;font-size:32.5px;color:#1f1f1f;left:1353.4px;letter-spacing:0.53px">link</span></div>
<svg class="i" style="left:1436px;top:1071px;width:33px;height:37px;overflow:visible;filter:drop-shadow(0 1px 1.500px rgba(0,0,0,.45))" viewBox="0 0 33 37"><path d="M9.500 1.500C11.500 1.200 12.800 2.600 13.300 4.500L15.600 12.200C16.600 10.600 19.300 10.600 20.200 12.600 21.500 11.300 24.600 11.600 25.300 13.800 26.800 13 29.600 13.600 30.300 15.800 31.400 18.800 31 23.400 29.600 26.600 28.600 29 27 31 26.600 34.200L12.600 34.400C11.600 31.600 9.400 29.400 7.400 26.800L2 20.200C.600 18.400 1.600 16 3.800 15.600 5.600 15.300 7.200 16.400 8.600 17.800L10.400 19.600 6.600 5.600C6 3.400 7.400 1.800 9.500 1.500Z" fill="#fff" stroke="#111" stroke-width="2" stroke-linejoin="round"/><path d="M16 20.200v7.300M20 20.200v7.300M24.300 20.200v7.300" stroke="#111" stroke-width="1.700" fill="none"/><path d="M15.600 12.200l.7 4.300M20.200 12.600l.3 3.600M25.300 13.800l.1 3.200" stroke="#111" stroke-width="1.500" fill="none" stroke-linecap="round"/></svg>
</div>
</body></html>
